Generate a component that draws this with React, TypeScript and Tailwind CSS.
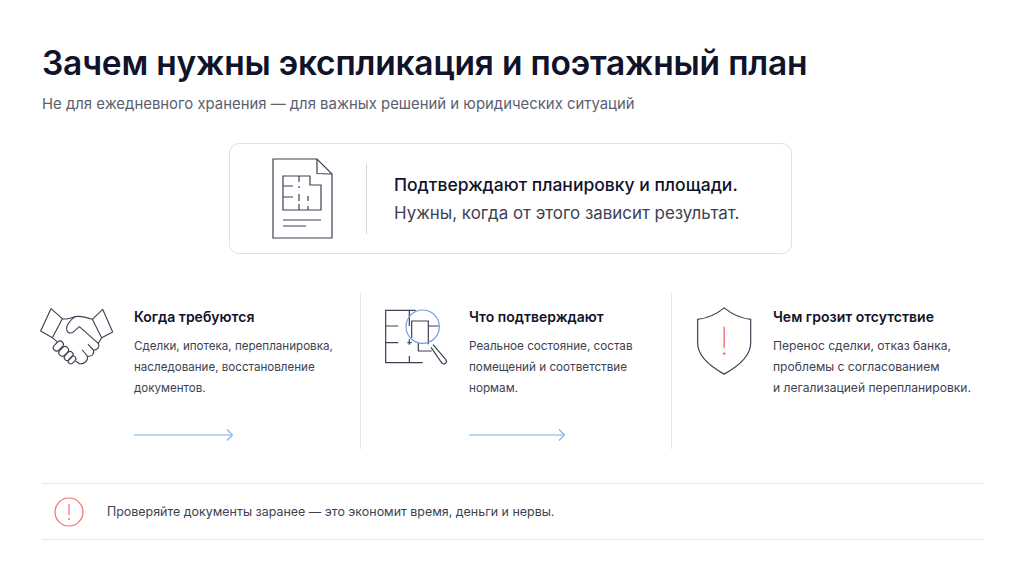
import React from 'react';

const font = { fontFamily: 'Inter, sans-serif' };

const Arrow = ({ width }: { width: number }) => (
  <svg width={width} height="12" viewBox={`0 0 ${width} 12`} fill="none" stroke="#7fb0f0" strokeWidth="1.2" className="block">
    <path d={`M0 6H${width - 1}`} />
    <path d={`M${width - 6} 0.5L${width - 0.5} 6L${width - 6} 11.5`} />
  </svg>
);

const Doc = () => (
  <svg width="61" height="81" viewBox="-1 -1 61 81" fill="none" stroke="#3d4152" strokeWidth="1.2" className="block">
    <path d="M0 0H44L59 15V79H0Z" />
    <path d="M44 0V14.5L59 15" />
    <path d="M10 17H37V26H48V51H10Z" />
    <path d="M10 27H20M10 38H20M26 17V23M26 27V29M26 35V42M26 45V51M35 37V42M35 47V51" />
    <path d="M10 61H48M10 67H33" />
  </svg>
);

// icons below are drawn on a 3x grid
const Handshake = () => (
  <svg width="75" height="60" viewBox="30 30 225 180" fill="none" stroke="#3d4152" strokeWidth="3.4" strokeLinejoin="round" strokeLinecap="round" className="block -ml-[2px]">
    <path d="M63 38L97 68L67 125L32 105Z" />
    <path d="M218 40L248 108L215 125L187 70Z" />
    <path d="M97 68C110 72 122 66 135 62C152 58 170 64 187 70" />
    <path d="M135 62C122 72 112 84 110 95C108 110 122 116 132 106L148 92L205 142" />
    <path d="M67 125L80 136M205 142L215 125" />
    <path d="M205 142C210 152 202 164 190 162L175 146M190 162C194 172 186 184 172 180L157 162M172 180C176 192 164 204 150 204L138 196" />
    <rect x="68" y="140" width="34" height="20" rx="10" transform="rotate(-45 85 150)" />
    <rect x="85" y="156" width="32" height="20" rx="10" transform="rotate(-45 101 166)" />
    <rect x="101" y="171" width="30" height="18" rx="9" transform="rotate(-45 116 180)" />
    <rect x="113" y="184" width="26" height="16" rx="8" transform="rotate(-45 126 192)" />
  </svg>
);

const PlanSearch = () => (
  <svg width="65" height="60" viewBox="30 30 195 180" fill="none" strokeWidth="3.6" className="block">
    <g stroke="#3d4152">
      <path d="M122 43H32V200H143" />
      <path d="M32 90H70M32 140H70M97 140H110M103 43V90M103 130V146M103 180V200" />
      <path d="M110 125V75H160V145M160 90H192" />
      <path d="M130 140V165H170" />
      <path d="M174 146L212 190C218 198 210 208 201 202L168 154" />
    </g>
    <circle cx="143" cy="92" r="50" stroke="#6f9fe0" />
  </svg>
);

const Shield = () => (
  <svg width="58" height="70" viewBox="30 30 175 210" fill="none" strokeWidth="3.6" className="block">
    <path d="M118 35C95 54 68 66 38 70V142C38 185 80 214 118 235C156 214 198 185 198 142V70C168 66 141 54 118 35Z" stroke="#3d4152" />
    <path d="M118 92V155" stroke="#f0565a" />
    <circle cx="118" cy="173" r="3.6" fill="#f0565a" stroke="none" />
  </svg>
);

const features = [
  {
    title: 'Когда требуются',
    lines: ['Сделки, ипотека, перепланировка,', 'наследование, восстановление', 'документов.'],
    icon: <Handshake />,
    arrow: 99,
    cell: 'w-[319px] border-r',
    iconBox: 'w-[92px] pt-[13px]',
    body: 'mt-[9px] text-[11.6px]',
  },
  {
    title: 'Что подтверждают',
    lines: ['Реальное состояние, состав', 'помещений и соответствие', 'нормам.'],
    icon: <PlanSearch />,
    arrow: 96,
    cell: 'w-[311px] pl-[24px] border-r',
    iconBox: 'w-[84px] pt-[13px]',
    body: 'mt-[9px] text-[11.7px]',
  },
  {
    title: 'Чем грозит отсутствие',
    lines: ['Перенос сделки, отказ банка,', 'проблемы с согласованием', 'и легализацией перепланировки.'],
    icon: <Shield />,
    arrow: 0,
    cell: 'flex-1 pl-[23px]',
    iconBox: 'w-[78px] pt-[13px]',
    body: 'mt-[8px] text-[12.1px]',
  },
];

export default function App() {
  return (
    <div className="w-[1024px] h-[576px] bg-white overflow-hidden pl-[42px] pr-[40px] pt-[42px]" style={font}>
      <h1 className="text-[33.5px] leading-[42px] font-semibold text-[#10132a] tracking-[-0.2px]">
        Зачем нужны экспликация и поэтажный план
      </h1>
      <p className="mt-[9px] text-[14.9px] leading-[22px] text-[#5b5f6e]">
        Не для ежедневного хранения — для важных решений и юридических ситуаций
      </p>

      <div className="mt-[28px] ml-[187px] w-[563px] h-[111px] rounded-[10px] border border-[#dfe1e8] flex items-center">
        <div className="w-[137px] h-[70px] border-r border-[#d5d7de] flex items-center pl-[42px]">
          <Doc />
        </div>
        <div className="pl-[27px] leading-[28px]">
          <div className="text-[17.5px] font-medium text-[#10132a]">Подтверждают планировку и площади.</div>
          <div className="text-[16.9px] text-[#3d4152]">Нужны, когда от этого зависит результат.</div>
        </div>
      </div>

      <div className="mt-[39px] flex h-[156px]">
        {features.map((f) => (
          <div key={f.title} className={`flex border-[#e3e5ea] ${f.cell}`}>
            <div className={`shrink-0 ${f.iconBox}`}>{f.icon}</div>
            <div className="pt-[14px]">
              <div className="text-[14px] leading-[20px] font-semibold text-[#10132a]">{f.title}</div>
              <div className={`leading-[21px] text-[#3d4152] ${f.body}`}>
                {f.lines.map((l) => (
                  <div key={l} className="whitespace-nowrap">{l}</div>
                ))}
              </div>
              {f.arrow > 0 && (
                <div className="mt-[30px]">
                  <Arrow width={f.arrow} />
                </div>
              )}
            </div>
          </div>
        ))}
      </div>

      <div className="mt-[34px] h-[57px] border-y border-[#e6e8ee] flex items-center pl-[12px]">
        <svg width="30" height="30" viewBox="0 0 30 30" fill="none" stroke="#f26d6f" strokeWidth="1.2" className="block">
          <circle cx="15" cy="15" r="14" />
          <path d="M15 7V18" />
          <circle cx="15" cy="22" r="0.9" fill="#f26d6f" stroke="none" />
        </svg>
        <span className="ml-[23px] pt-[1px] text-[12.45px] text-[#3d4152]">
          Проверяйте документы заранее — это экономит время, деньги и нервы.
        </span>
      </div>
    </div>
  );
}
